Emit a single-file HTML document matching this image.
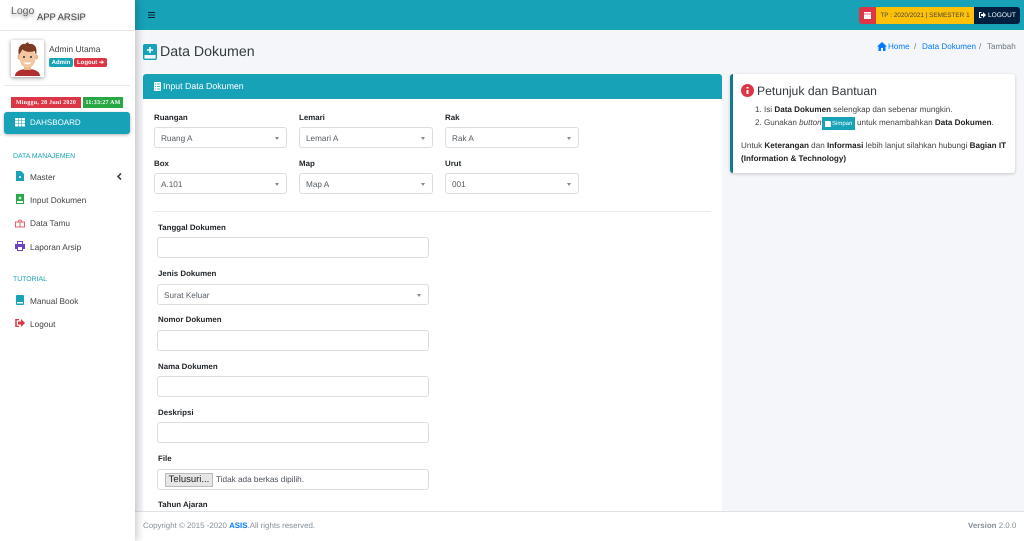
<!DOCTYPE html>
<html><head><meta charset="utf-8"><style>
html,body{margin:0;padding:0}
body{width:1024px;height:541px;overflow:hidden;background:#f4f6f9;position:relative;font-family:"Liberation Sans",sans-serif;color:#212529;text-rendering:geometricPrecision}
.a{position:absolute;white-space:nowrap}
.s{position:absolute;box-sizing:border-box;height:21px;background:#fff;border:1px solid #dadde2;border-radius:3px;color:#555c63;font-size:8.2px;line-height:21px;padding-left:6px}
.s i{position:absolute;right:7px;top:9px;width:0;height:0;border:2.5px solid transparent;border-top:3px solid #888;border-bottom:0}
.l{position:absolute;font-size:7.9px;font-weight:bold;color:#212529;white-space:nowrap;margin-top:1px}
.m{position:absolute;left:30px;font-size:8.3px;color:#444;white-space:nowrap}
svg{position:absolute}
#side{position:absolute;left:0;top:0;width:135px;height:541px;background:#fff;box-shadow:2px 0 8px rgba(0,0,0,.22);z-index:5}
</style></head><body>
<div class="a" style="left:135px;top:0;width:889px;height:30px;background:#17a2b8"></div>

<svg style="left:148px;top:12px" width="7" height="6"><path d="M0 0h7v1H0zM0 2.500h7v1H0zM0 5h7v1H0z" fill="#123"/></svg>
<div class="a" style="left:859px;top:7px;width:17px;height:17px;background:#dc3545;border-radius:3px 0 0 3px"></div>
<svg style="left:864px;top:11px" width="7" height="8"><path d="M0 1h7v7H0z" fill="#fff"/><path d="M0 3h7" stroke="#dc3545" stroke-width=".7"/></svg>
<div class="a" style="left:876px;top:7px;width:98px;height:17px;background:#ffc107;color:#444;font-size:6.4px;line-height:17px;text-align:center">TP : 2020/2021 | SEMESTER 1</div>
<div class="a" style="left:974px;top:7px;width:46px;height:17px;background:#001f3f;border-radius:0 3px 3px 0;color:#fff;font-size:6.6px;line-height:17px;text-indent:14px">LOGOUT</div>
<svg style="left:979px;top:12px" width="7" height="6"><path d="M2.500.5H.5v5h2" fill="none" stroke="#fff"/><path d="M2 2h2V0l3 3-3 3V4H2z" fill="#fff"/></svg>

<svg style="left:143px;top:44px" width="14" height="16"><rect x=".7" y=".7" width="12.600" height="14.600" rx="1" fill="none" stroke="#17a2b8" stroke-width="1.400"/><rect x="1" y="1" width="12" height="10" fill="#17a2b8"/><path d="M4 6h6M7 3v6" stroke="#fff" stroke-width="1.500"/></svg>
<div class="a" style="left:160px;top:44px;font-size:14.2px;color:#343a40">Data Dokumen</div>
<svg style="left:877px;top:42px" width="10" height="9"><path d="M5 0L0 4.500h1.500V9h2.500V6h2v3h2.500V4.500H10z" fill="#007bff"/></svg>
<div class="a" style="left:888px;top:42px;font-size:8.1px;color:#007bff">Home</div>
<div class="a" style="left:914px;top:42px;font-size:8.1px;color:#6c757d">/</div>
<div class="a" style="left:922px;top:42px;font-size:8.1px;color:#007bff">Data Dokumen</div>
<div class="a" style="left:979px;top:42px;font-size:8.1px;color:#6c757d">/</div>
<div class="a" style="left:987px;top:42px;font-size:8.1px;color:#6c757d">Tambah</div>

<div class="a" style="left:143px;top:74px;width:579px;height:440px;background:#fff;border-radius:3px 3px 0 0"></div>
<div class="a" style="left:143px;top:74px;width:579px;height:25px;background:#17a2b8;border-radius:3px 3px 0 0;color:#fff;font-size:8.8px;line-height:25px;text-indent:20px">Input Data Dokumen</div>
<svg style="left:154px;top:82px" width="7" height="9"><rect width="7" height="9" rx="1" fill="#fff"/><path d="M1 2h1M3 2h3M1 4.500h1M3 4.500h3M1 7h1M3 7h3" stroke="#17a2b8" stroke-width=".7"/></svg>

<div class="l" style="left:154px;top:112px">Ruangan</div><div class="s" style="left:154px;top:127px;width:133px">Ruang A<i></i></div>
<div class="l" style="left:299px;top:112px">Lemari</div><div class="s" style="left:299px;top:127px;width:134px">Lemari A<i></i></div>
<div class="l" style="left:445px;top:112px">Rak</div><div class="s" style="left:445px;top:127px;width:134px">Rak A<i></i></div>
<div class="l" style="left:154px;top:158px">Box</div><div class="s" style="left:154px;top:173px;width:133px">A.101<i></i></div>
<div class="l" style="left:299px;top:158px">Map</div><div class="s" style="left:299px;top:173px;width:134px">Map A<i></i></div>
<div class="l" style="left:445px;top:158px">Urut</div><div class="s" style="left:445px;top:173px;width:134px">001<i></i></div>
<div class="a" style="left:154px;top:211px;width:557px;height:1px;background:#e8eaed"></div>

<div class="l" style="left:158px;top:222px">Tanggal Dokumen</div><div class="s" style="left:157px;top:237px;width:272px"></div>
<div class="l" style="left:158px;top:268px">Jenis Dokumen</div><div class="s" style="left:157px;top:284px;width:272px">Surat Keluar<i></i></div>
<div class="l" style="left:158px;top:314px">Nomor Dokumen</div><div class="s" style="left:157px;top:330px;width:272px"></div>
<div class="l" style="left:158px;top:361px">Nama Dokumen</div><div class="s" style="left:157px;top:376px;width:272px"></div>
<div class="l" style="left:158px;top:407px">Deskripsi</div><div class="s" style="left:157px;top:422px;width:272px"></div>
<div class="l" style="left:158px;top:453px">File</div><div class="s" style="left:157px;top:469px;width:272px"></div>
<div class="a" style="left:165px;top:473px;width:48px;height:14px;box-sizing:border-box;background:#e6e6e6;border:1px solid #bbb;font-size:9.5px;line-height:12px;text-align:center;color:#222">Telusuri...</div>
<div class="a" style="left:216px;top:475px;font-size:8.2px;color:#495057">Tidak ada berkas dipilih.</div>
<div class="l" style="left:158px;top:499px">Tahun Ajaran</div>

<div class="a" style="left:135px;top:511px;width:889px;height:30px;background:#fff;border-top:1px solid #dee2e6;box-sizing:border-box"></div>
<div class="a" style="left:143px;top:521px;font-size:7.9px;color:#869099">Copyright © 2015 -2020 <b style="color:#007bff">ASIS</b>.All rights reserved.</div>
<div class="a" style="left:968px;top:521px;font-size:7.9px;color:#869099"><b>Version</b> 2.0.0</div>

<div class="a" style="left:730px;top:74px;width:285px;height:99px;box-sizing:border-box;background:#fff;border-left:3px solid #117a8b;border-radius:3px;box-shadow:0 1px 3px rgba(0,0,0,.2)"></div>
<svg style="left:741px;top:84px" width="13" height="13"><circle cx="6.500" cy="6.500" r="6.500" fill="#dc3545"/><path d="M6.500 3v1.500M6.500 6v4" stroke="#fff" stroke-width="2"/></svg>
<div class="a" style="left:757px;top:84px;font-size:12.2px;color:#343a40">Petunjuk dan Bantuan</div>
<div class="a" style="left:755px;top:105px;font-size:8.1px;color:#444">1. Isi <b style="color:#222">Data Dokumen</b> selengkap dan sebenar mungkin.</div>
<div class="a" style="left:755px;top:118px;font-size:8.1px;color:#444">2. Gunakan <i>button</i></div>
<div class="a" style="left:822px;top:117px;width:33px;height:13px;background:#17a2b8;color:#fff;font-size:6px;line-height:14px;text-indent:10px">Simpan</div>
<svg style="left:825px;top:121px" width="6" height="6"><path d="M0 0h5l1 1v5H0z" fill="#fff"/></svg>
<div class="a" style="left:857px;top:118px;font-size:8.1px;color:#444">untuk menambahkan <b style="color:#222">Data Dokumen</b>.</div>
<div class="a" style="left:741px;top:141px;font-size:8.1px;color:#444">Untuk <b style="color:#222">Keterangan</b> dan <b style="color:#222">Informasi</b> lebih lanjut silahkan hubungi <b style="color:#222">Bagian IT</b></div>
<div class="a" style="left:741px;top:154px;font-size:8.1px;color:#222"><b>(Information &amp; Technology)</b></div>

<div id="side">
<div class="a" style="left:11px;top:5px;font-size:10.500px;color:#666;text-shadow:0 2px 3px rgba(0,0,0,.4)">Logo</div>
<div class="a" style="left:37px;top:11px;font-size:9.4px;color:#444;text-shadow:0 1px 2px rgba(0,0,0,.3)">APP ARSIP</div>
<div class="a" style="left:0;top:30px;width:135px;height:1px;background:#e6e6e6"></div>
<div class="a" style="left:11px;top:40px;width:33px;height:37px;background:#fff;box-shadow:0 1px 4px rgba(0,0,0,.4)"></div>
<svg style="left:11px;top:40px" width="33" height="37" viewBox="0 0 33 37"><path d="M4 36c0-5 6-7 12.500-7S29 31 29 36z" fill="#b0302f"/><rect x="13" y="24" width="7" height="6" fill="#e8b48c"/><ellipse cx="5.500" cy="17" rx="1.500" ry="2.500" fill="#e8b48c" transform="translate(2.500 0)"/><ellipse cx="24.500" cy="17" rx="1.500" ry="2.500" fill="#e8b48c" transform="translate(1 0)"/><ellipse cx="16.500" cy="18" rx="8" ry="10" fill="#f2c6a0"/><path d="M8 15C6 8 10 3 14 4l3-2 1 2c5-1 9 3 7 11l-1.500-4c-4 1.500-9 1-12-1.500z" fill="#7a3b22"/><circle cx="13" cy="17" r="1" fill="#333"/><circle cx="20" cy="17" r="1" fill="#333"/><path d="M12.500 22.500c2 2.500 6 2.500 8 0z" fill="#fff"/></svg>
<div class="a" style="left:49px;top:44px;font-size:8.5px;color:#444">Admin Utama</div>
<div class="a" style="left:49px;top:58px;height:9px;width:24px;background:#17a2b8;border-radius:2px;color:#fff;font-size:6px;font-weight:bold;line-height:10px;text-align:center">Admin</div>
<div class="a" style="left:74px;top:58px;height:9px;width:33px;background:#dc3545;border-radius:2px;color:#fff;font-size:6px;font-weight:bold;line-height:10px;text-align:center">Logout ➔</div>
<div class="a" style="left:4px;top:85px;width:126px;height:1px;background:#e9e9e9"></div>
<div class="a" style="left:11px;top:97px;width:70px;height:11px;background:#dc3545;color:#fff;font:bold 6px/12px 'Liberation Serif',serif;letter-spacing:.25px;text-align:center">Minggu, 28 Juni 2020</div>
<div class="a" style="left:83px;top:97px;width:40px;height:11px;background:#28a745;color:#fff;font:bold 6px/12px 'Liberation Serif',serif;letter-spacing:.2px;text-align:center">11:33:27 AM</div>
<div class="a" style="left:4px;top:112px;width:126px;height:22px;background:#17a2b8;border-radius:3px;box-shadow:0 1px 3px rgba(0,0,0,.3);color:#fff;font-size:8px;line-height:22px;text-indent:26px">DAHSBOARD</div>
<svg style="left:15px;top:118px" width="10" height="9"><path d="M0 0h3v2.500H0zM3.500 0h3v2.500h-3zM7 0h3v2.500H7zM0 3h3v2.500H0zM3.500 3h3v2.500h-3zM7 3h3v2.500H7zM0 6h3v2.500H0zM3.500 6h3v2.500h-3zM7 6h3v2.500H7z" fill="#fff"/></svg>
<div class="a" style="left:13px;top:153px;font-size:6.9px;color:#17a2b8">DATA MANAJEMEN</div>
<svg style="left:16px;top:171px" width="8" height="10"><path d="M0 0h5l3 3v7H0z" fill="#17a2b8"/><path d="M3 6h2M4 5v2" stroke="#fff"/></svg>
<div class="m" style="top:172px">Master</div>
<svg style="left:117px;top:173px" width="5" height="7"><path d="M4 .5L1 3.500l3 3" fill="none" stroke="#333" stroke-width="1.500"/></svg>
<svg style="left:16px;top:194px" width="8" height="10"><rect x=".5" y=".5" width="7" height="9" fill="#fff" stroke="#28a745"/><rect x="1" y="1" width="6" height="6" fill="#28a745"/><path d="M2.500 4h3M4 2.500v3" stroke="#fff"/></svg>
<div class="m" style="top:195px">Input Dokumen</div>
<svg style="left:15px;top:218px" width="10" height="10"><path d="M.5 4h9v5h-9zM5 4v5M3.500 3.500a1.500 1.500 0 1 1 3 0" fill="none" stroke="#ec5d6b"/></svg>
<div class="m" style="top:218px">Data Tamu</div>
<svg style="left:15px;top:241px" width="10" height="10"><path d="M2 0h6v3h2v5H8v2H2V8H0V3h2z" fill="#6f42c1"/><rect x="3" y="1" width="4" height="2" fill="#fff"/><rect x="3" y="6" width="4" height="3" fill="#fff"/></svg>
<div class="m" style="top:242px">Laporan Arsip</div>
<div class="a" style="left:13px;top:276px;font-size:6.9px;color:#17a2b8">TUTORIAL</div>
<svg style="left:16px;top:295px" width="8" height="10"><rect width="8" height="10" rx="1" fill="#17a2b8"/><rect x="1" y="7" width="6" height="1.500" fill="#fff"/></svg>
<div class="m" style="top:296px">Manual Book</div>
<svg style="left:15px;top:319px" width="10" height="8"><path d="M4 .5H1v7h3" fill="none" stroke="#dc3545" stroke-width="1.500"/><path d="M3 2.500h3V0l4 4-4 4V5.500H3z" fill="#dc3545"/></svg>
<div class="m" style="top:319px">Logout</div>
</div>
</body></html>
